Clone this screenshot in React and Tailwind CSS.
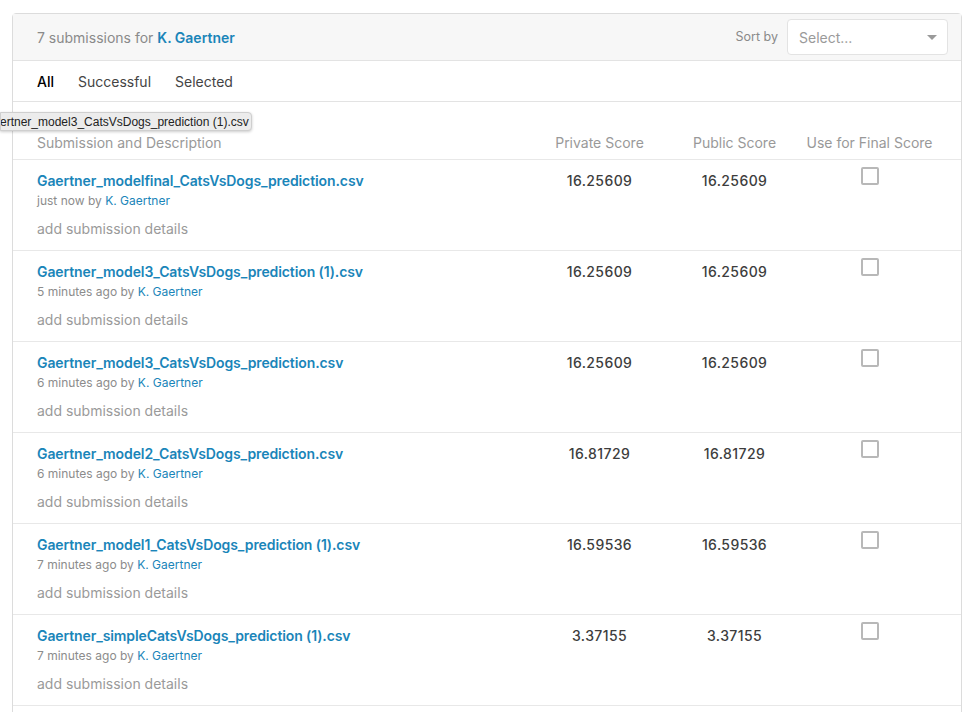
import React from 'react';

const rows = [
  { name: 'Gaertner_modelfinal_CatsVsDogs_prediction.csv', when: 'just now', priv: '16.25609', pub: '16.25609' },
  { name: 'Gaertner_model3_CatsVsDogs_prediction (1).csv', when: '5 minutes ago', priv: '16.25609', pub: '16.25609' },
  { name: 'Gaertner_model3_CatsVsDogs_prediction.csv', when: '6 minutes ago', priv: '16.25609', pub: '16.25609' },
  { name: 'Gaertner_model2_CatsVsDogs_prediction.csv', when: '6 minutes ago', priv: '16.81729', pub: '16.81729' },
  { name: 'Gaertner_model1_CatsVsDogs_prediction (1).csv', when: '7 minutes ago', priv: '16.59536', pub: '16.59536' },
  { name: 'Gaertner_simpleCatsVsDogs_prediction (1).csv', when: '7 minutes ago', priv: '3.37155', pub: '3.37155' },
];

function SubmissionRow({ row }) {
  return (
    <div className="grid grid-cols-[1fr_135px_135px_135px] border-b border-[#e8e8e8] pl-6 pr-6">
      <div className="pt-[11px] pb-[11px]">
        <div className="text-[14px] leading-5 font-semibold tracking-[-0.1px] text-[#1a85b9]">{row.name}</div>
        <div className="mt-[2px] text-[12px] leading-4 text-[#8c8c8c]">
          {row.when} by <span className="text-[#1a85b9]">K. Gaertner</span>
        </div>
        <div className="mt-[10px] text-[14px] leading-5 text-[#9a9a9a]">add submission details</div>
      </div>
      <div className="pt-[11px] text-center text-[14px] leading-5 font-medium tracking-[0.4px] text-[#3d3d3d]">{row.priv}</div>
      <div className="pt-[11px] text-center text-[14px] leading-5 font-medium tracking-[0.4px] text-[#3d3d3d]">{row.pub}</div>
      <div className="flex justify-center pt-[7px]">
        <div className="h-[18px] w-[18px] rounded-[2px] border-2 border-[#b8b8b8] bg-white" />
      </div>
    </div>
  );
}

export default function App() {
  return (
    <div className="h-[712px] overflow-hidden bg-white pl-3 pr-[17px] pt-[13px] font-['Inter',sans-serif]">
      <div className="relative h-[720px] rounded-t-[4px] border border-[#dcdcdc]">
        {/* header */}
        <div className="flex h-[47px] items-center justify-between border-b border-[#e3e3e3] bg-[#f7f7f7] pl-6 pr-[13px]">
          <div className="text-[14px] text-[#8a8a8a]">
            7 submissions for <span className="font-semibold text-[#1a85b9]">K. Gaertner</span>
          </div>
          <div className="flex items-center gap-[9px]">
            <span className="text-[12.5px] text-[#8a8a8a]">Sort by</span>
            <div className="flex h-[36px] w-[161px] items-center justify-between rounded-[4px] border border-[#e3e3e3] bg-white pl-[11px] pr-[10px]">
              <span className="text-[14px] text-[#9a9a9a]">Select...</span>
              <svg width="10" height="5" viewBox="0 0 10 5">
                <path d="M0 0 L10 0 L5 5 Z" fill="#9a9a9a" />
              </svg>
            </div>
          </div>
        </div>

        {/* tabs */}
        <div className="flex h-[41px] items-center gap-[24px] border-b border-[#e3e3e3] pl-6 text-[14px]">
          <span className="font-medium text-black">All</span>
          <span className="text-[#444]">Successful</span>
          <span className="text-[#444]">Selected</span>
        </div>

        {/* table header */}
        <div className="grid grid-cols-[1fr_135px_135px_135px] border-b border-[#e8e8e8] pl-6 pr-6 pt-[31px] pb-[6px] text-[14px] leading-5 text-[#999]">
          <div>Submission and Description</div>
          <div className="text-center">Private Score</div>
          <div className="text-center">Public Score</div>
          <div className="text-center">Use for Final Score</div>
        </div>

        {rows.map((row, i) => (
          <SubmissionRow key={i} row={row} />
        ))}
      </div>

      {/* tooltip */}
      <div className="absolute left-0 top-[112px] flex h-[19px] w-[252px] items-center overflow-hidden rounded-r-[4px] border border-[#cfcfcf] bg-[#ececec] shadow-[0_1px_3px_rgba(0,0,0,0.2)]">
        <span className="-ml-[17px] whitespace-nowrap font-['Liberation_Sans',sans-serif] text-[12px] text-[#222]">
          Gaertner_model3_CatsVsDogs_prediction (1).csv
        </span>
      </div>
    </div>
  );
}
